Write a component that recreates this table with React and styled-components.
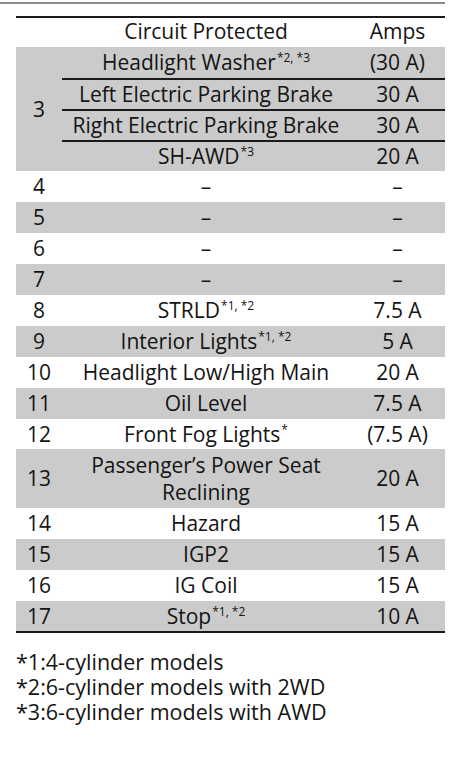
import React from 'react';
import styled, { createGlobalStyle } from 'styled-components';

const GlobalStyle = createGlobalStyle`
    body {
        margin: 0;
        background: #fff;
        font-family: "Open Sans", "Noto Sans", sans-serif;
        color: #141414;
    }
`;

const Page = styled.div`
    width: 474px;
    height: 763px;
    padding-top: 2px;
    box-sizing: border-box;
`;

const TopRule = styled.div`
    width: 445px;
    height: 2px;
    background: #8a8a8a;
    margin-bottom: 12px;
`;

const Table = styled.table`
    margin-left: 16px;
    width: 429px;
    border-collapse: collapse;
    table-layout: fixed;
    font-size: 21px;
    border-top: 2px solid #1a1a1a;
    border-bottom: 2px solid #1a1a1a;
`;

const HeadCell = styled.th`
    font-weight: 400;
    height: 26px;
    padding: 0 0 3px;
    text-align: center;
    vertical-align: middle;
    line-height: 24px;
`;

const Row = styled.tr`
    background: ${(p) => (p.$shade ? '#cbcbcb' : '#fff')};
`;

const Cell = styled.td`
    padding: 0;
    height: ${(p) => p.$h || 31}px;
    text-align: center;
    vertical-align: middle;
    line-height: 27px;
    white-space: nowrap;
    border-top: ${(p) => (p.$divider ? '2px solid #1a1a1a' : 'none')};
`;

const Sup = styled.sup`
    font-size: 12px;
    line-height: 0;
    vertical-align: 8px;
    margin-left: 1px;
`;

const Notes = styled.div`
    margin: 16px 0 0 16px;
    font-size: 21.5px;
    line-height: 25px;
`;

const fuses = [
    { no: 4, name: '–', amps: '–' },
    { no: 5, name: '–', amps: '–' },
    { no: 6, name: '–', amps: '–' },
    { no: 7, name: '–', amps: '–' },
    { no: 8, name: 'STRLD', sup: '*1, *2', amps: '7.5 A' },
    { no: 9, name: 'Interior Lights', sup: '*1, *2', amps: '5 A' },
    { no: 10, name: 'Headlight Low/High Main', amps: '20 A' },
    { no: 11, name: 'Oil Level', amps: '7.5 A' },
    { no: 12, name: 'Front Fog Lights', sup: '*', amps: '(7.5 A)', h: 30 },
    { no: 13, name: 'Passenger’s Power Seat Reclining', amps: '20 A', h: 59 },
    { no: 14, name: 'Hazard', amps: '15 A' },
    { no: 15, name: 'IGP2', amps: '15 A' },
    { no: 16, name: 'IG Coil', amps: '15 A' },
    { no: 17, name: 'Stop', sup: '*1, *2', amps: '10 A', h: 30 },
];

const fuse3 = [
    { name: 'Headlight Washer', sup: '*2, *3', amps: '(30 A)' },
    { name: 'Left Electric Parking Brake', amps: '30 A' },
    { name: 'Right Electric Parking Brake', amps: '30 A' },
    { name: 'SH-AWD', sup: '*3', amps: '20 A' },
];

const Name = ({ name, sup }) => (
    <>
        {name}
        {sup && <Sup>{sup}</Sup>}
    </>
);

const App = () => {
    return (
        <Page>
            <GlobalStyle />
            <TopRule />
            <Table>
                <colgroup>
                    <col style={{ width: 46 }} />
                    <col style={{ width: 288 }} />
                    <col style={{ width: 95 }} />
                </colgroup>
                <thead>
                    <tr>
                        <HeadCell />
                        <HeadCell>Circuit Protected</HeadCell>
                        <HeadCell>Amps</HeadCell>
                    </tr>
                </thead>
                <tbody>
                    {fuse3.map((f, i) => (
                        <Row $shade key={f.name}>
                            {i === 0 && <Cell rowSpan={4}>3</Cell>}
                            <Cell $divider={i > 0} $h={i > 0 ? 29 : 31}>
                                <Name name={f.name} sup={f.sup} />
                            </Cell>
                            <Cell $divider={i > 0} $h={i > 0 ? 29 : 31}>{f.amps}</Cell>
                        </Row>
                    ))}
                    {fuses.map((f) => (
                        <Row $shade={f.no % 2 === 1} key={f.no}>
                            <Cell $h={f.h}>{f.no}</Cell>
                            <Cell $h={f.h}>
                                {f.no === 13 ? (
                                    <>
                                        Passenger’s Power Seat
                                        <br />
                                        Reclining
                                    </>
                                ) : (
                                    <Name name={f.name} sup={f.sup} />
                                )}
                            </Cell>
                            <Cell $h={f.h}>{f.amps}</Cell>
                        </Row>
                    ))}
                </tbody>
            </Table>
            <Notes>
                <div>*1:4-cylinder models</div>
                <div>*2:6-cylinder models with 2WD</div>
                <div>*3:6-cylinder models with AWD</div>
            </Notes>
        </Page>
    );
};

export default App;
